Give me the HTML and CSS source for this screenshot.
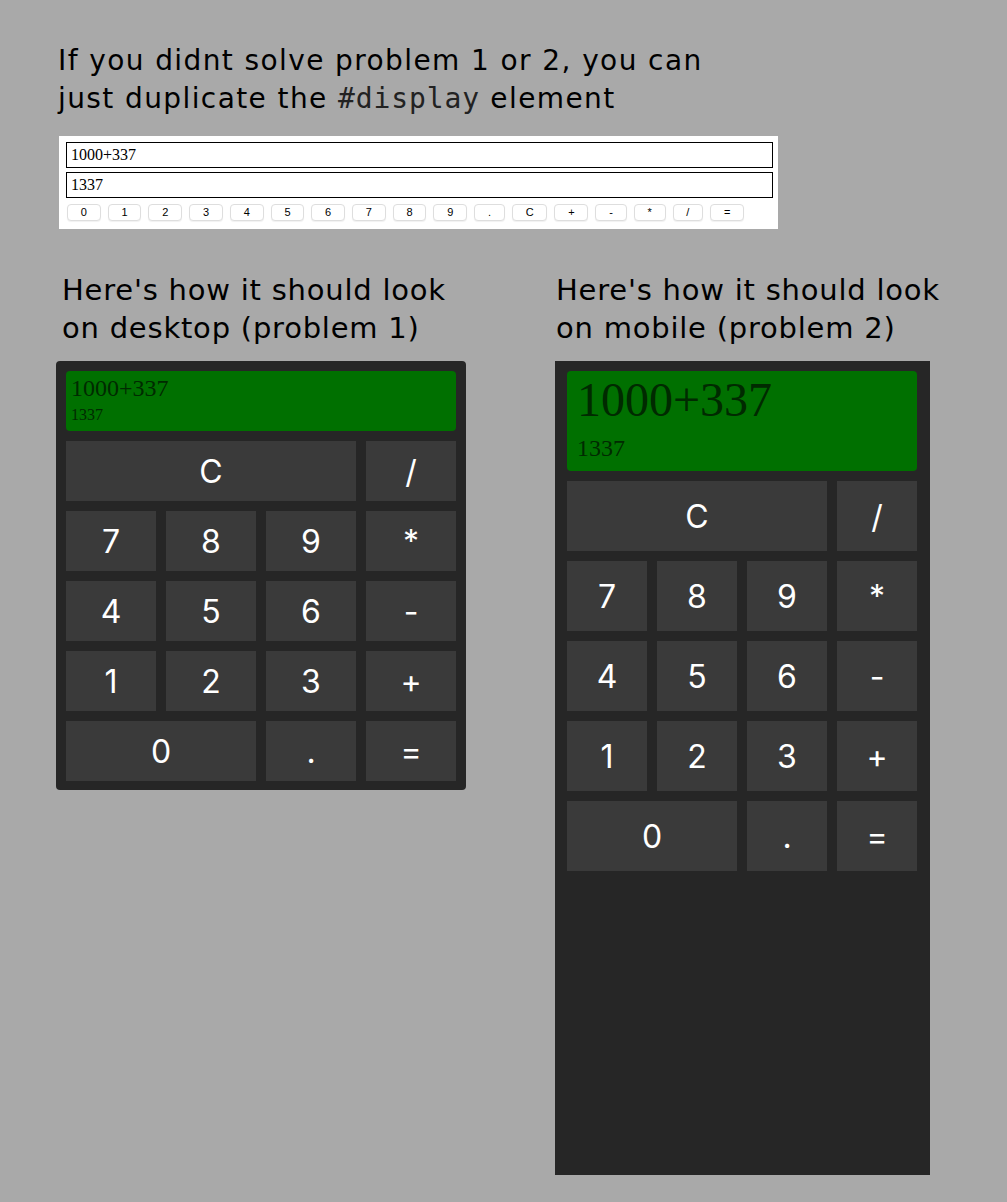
FILE: index.html
```html
<!DOCTYPE html>
<html lang="en">
<head>
<meta charset="utf-8">
<title>Calculator problems</title>
<link rel="stylesheet" href="styles.css">
</head>
<body>
<main class="page">
  <p class="intro">If you didnt solve problem 1 or 2, you can<br>just duplicate the <code class="code">#display</code> element</p>

  <div class="legacy">
    <div class="field">1000+337</div>
    <div class="field field-second">1337</div>
    <div class="keys">
      <button class="mini">0</button>
      <button class="mini">1</button>
      <button class="mini">2</button>
      <button class="mini">3</button>
      <button class="mini">4</button>
      <button class="mini">5</button>
      <button class="mini">6</button>
      <button class="mini">7</button>
      <button class="mini">8</button>
      <button class="mini">9</button>
      <button class="mini">.</button>
      <button class="mini">C</button>
      <button class="mini">+</button>
      <button class="mini">-</button>
      <button class="mini">*</button>
      <button class="mini">/</button>
      <button class="mini">=</button>
    </div>
  </div>

  <div class="columns">
    <section class="col col-desktop">
      <h2 class="heading">Here's how it should look<br>on desktop (problem 1)</h2>
      <div class="calc calc-desktop">
        <div class="display">
          <div class="expr">1000+337</div>
          <div class="result">1337</div>
        </div>
        <div class="pad">
          <button class="key span3">C</button>
          <button class="key">/</button>
          <button class="key">7</button>
          <button class="key">8</button>
          <button class="key">9</button>
          <button class="key">*</button>
          <button class="key">4</button>
          <button class="key">5</button>
          <button class="key">6</button>
          <button class="key">-</button>
          <button class="key">1</button>
          <button class="key">2</button>
          <button class="key">3</button>
          <button class="key">+</button>
          <button class="key span2">0</button>
          <button class="key">.</button>
          <button class="key">=</button>
        </div>
      </div>
    </section>

    <section class="col col-mobile">
      <h2 class="heading">Here's how it should look<br>on mobile (problem 2)</h2>
      <div class="calc calc-mobile">
        <div class="display">
          <div class="expr">1000+337</div>
          <div class="result">1337</div>
        </div>
        <div class="pad">
          <button class="key span3">C</button>
          <button class="key">/</button>
          <button class="key">7</button>
          <button class="key">8</button>
          <button class="key">9</button>
          <button class="key">*</button>
          <button class="key">4</button>
          <button class="key">5</button>
          <button class="key">6</button>
          <button class="key">-</button>
          <button class="key">1</button>
          <button class="key">2</button>
          <button class="key">3</button>
          <button class="key">+</button>
          <button class="key span2">0</button>
          <button class="key">.</button>
          <button class="key">=</button>
        </div>
      </div>
    </section>
  </div>
</main>
</body>
</html>
```

FILE: styles.css
```css
html, body {
  margin: 0;
  padding: 0;
}

body {
  background: #a9a9a9;
  color: #000;
  font-family: "DejaVu Sans", sans-serif;
}

.page {
  padding: 42px 0 27px 0;
}

.intro {
  margin: 0 0 18px 58px;
  font-size: 28px;
  line-height: 38px;
  letter-spacing: 1.4px;
  white-space: nowrap;
}

.code {
  font-family: "DejaVu Sans Mono", monospace;
  font-size: 28px;
  line-height: 0;
  letter-spacing: 0.9px;
  color: #222;
}

.legacy {
  margin-left: 59px;
  width: 719px;
  height: 93px;
  box-sizing: border-box;
  background: #fff;
  padding: 6px 5px 0 7px;
}

.field {
  height: 26px;
  box-sizing: border-box;
  border: 1px solid #000;
  padding: 0 4px;
  font-family: "Liberation Serif", serif;
  font-size: 16px;
  line-height: 24px;
}

.field-second {
  margin-top: 4px;
}

.keys {
  display: flex;
  gap: 7px;
  margin-top: 6px;
  padding-left: 1px;
}

.mini {
  height: 17px;
  margin: 0;
  padding: 0 12.8px;
  border: 1px solid #dedede;
  border-radius: 4px;
  background: #fff;
  box-shadow: 0 1px 1px rgba(0, 0, 0, 0.06);
  color: #000;
  font-family: "Liberation Sans", Arial, sans-serif;
  font-size: 11px;
  line-height: 15px;
}

.columns {
  display: flex;
  align-items: flex-start;
  margin-top: 43px;
}

.col-desktop {
  margin-left: 56px;
  width: 410px;
}

.col-mobile {
  margin-left: 89px;
  width: 375px;
}

.heading {
  margin: 0 0 14px 0;
  font-size: 29px;
  line-height: 37.5px;
  font-weight: normal;
  letter-spacing: 0.78px;
  white-space: nowrap;
}

.col-desktop .heading {
  padding-left: 6px;
}

.col-mobile .heading {
  padding-left: 1px;
}

.calc {
  background: #262626;
  box-sizing: border-box;
}

.calc-desktop {
  border-radius: 4px;
  padding: 10px 10px 9px 10px;
}

.calc-mobile {
  height: 814px;
  padding: 10px 13px 0 12px;
}

.display {
  background: #007000;
  border-radius: 4px;
  color: #002a00;
  font-family: "Liberation Serif", serif;
  box-sizing: border-box;
}

.calc-desktop .display {
  height: 60px;
  padding: 4px 5px;
}

.calc-desktop .expr {
  font-size: 24px;
}

.calc-desktop .result {
  font-size: 16px;
  margin-top: 4px;
}

.calc-mobile .display {
  height: 100px;
  padding: 1px 10px;
}

.calc-mobile .expr {
  font-size: 48px;
}

.calc-mobile .result {
  font-size: 24px;
  margin-top: 8px;
}

.pad {
  display: grid;
  gap: 10px;
  margin-top: 10px;
}

.calc-desktop .pad {
  grid-template-columns: repeat(4, 90px);
  grid-auto-rows: 60px;
}

.calc-mobile .pad {
  grid-template-columns: repeat(4, 80px);
  grid-auto-rows: 70px;
}

.key {
  display: flex;
  align-items: center;
  justify-content: center;
  margin: 0;
  padding: 0;
  border: 0;
  background: #3a3a3a;
  color: #fff;
  font-family: Inter, "Liberation Sans", sans-serif;
  font-size: 32px;
}

.span3 {
  grid-column: span 3;
}

.span2 {
  grid-column: span 2;
}
```
